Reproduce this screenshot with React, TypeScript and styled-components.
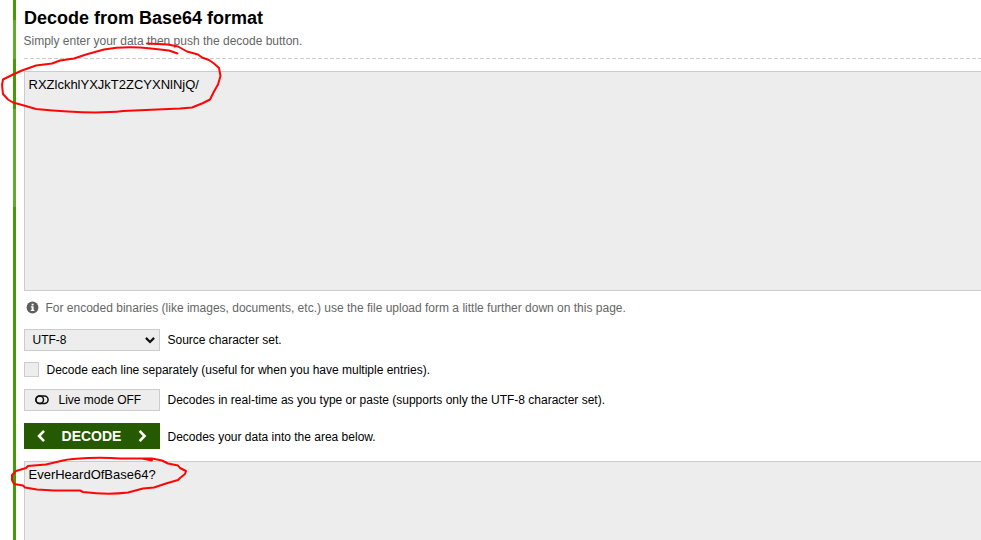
import React from "react";
import styled, { createGlobalStyle } from "styled-components";

const GlobalStyle = createGlobalStyle`
  * { box-sizing: border-box; }
  body {
    margin: 0;
    background: #fff;
    color: #000;
    font: 12px/16px "Liberation Sans", Arial, sans-serif;
    overflow: hidden;
  }
`;

const Page = styled.div`
  position: relative;
  display: flex;
  width: 981px;
  height: 540px;
  padding-left: 13px;
  overflow: hidden;
`;

const Stripe = styled.div`
  flex: 0 0 3px;
  background: linear-gradient(
    #439c03 20px,
    #5fad2b 20px 59px,
    #439c03 59px 109px,
    #5fad2b 109px 207px,
    #439c03 207px
  );
`;

const Main = styled.main`
  flex: none;
  display: flex;
  flex-direction: column;
  width: 985px;
  margin-left: 8px;
`;

const Header = styled.header`
  height: 59px;
  padding-top: 7px;
  flex: none;
  background: repeating-linear-gradient(90deg, #ccc 0 4px, transparent 4px 6px) 0 100% / 100% 1px no-repeat;
`;

const Title = styled.h1`
  margin: 0;
  font-size: 18px;
  line-height: 22px;
  font-weight: bold;
`;

const Subtitle = styled.p`
  margin: 4px 0 0 -0.5px;
  color: #666;
`;

const TextArea = styled.div<{ $height: number; $top: number }>`
  flex: none;
  height: ${(p) => p.$height}px;
  margin-top: ${(p) => p.$top}px;
  padding: 5px 3.5px;
  border: 1px solid #ccc;
  background: #ededed;
  font-size: 13px;
`;

const Hint = styled.div`
  display: flex;
  align-items: center;
  gap: 6.5px;
  height: 16px;
  margin: 9px 0 13px 2px;
  color: #666;
`;

const Row = styled.div<{ $height: number; $bottom: number }>`
  display: flex;
  flex: none;
  align-items: center;
  gap: 7.5px;
  height: ${(p) => p.$height}px;
  margin-bottom: ${(p) => p.$bottom}px;
`;

const Control = styled.div`
  display: flex;
  align-items: center;
  width: 136px;
  height: 22px;
  border: 1px solid #ccc;
  background: #ededed;
`;

const Select = styled(Control)`
  justify-content: space-between;
  padding: 0 3px 0 7.5px;
`;

const LiveToggle = styled(Control)`
  padding-left: 10px;
  gap: 9.5px;
`;

const Checkbox = styled.div`
  width: 15px;
  height: 15px;
  border: 1px solid #ccc;
  background: #ededed;
`;

const DecodeButton = styled.div`
  display: flex;
  align-items: center;
  justify-content: space-between;
  width: 136px;
  height: 26px;
  padding: 0 13px 0 12px;
  background: #265a00;
  color: #fff;
  font-size: 14px;
  font-weight: bold;
`;

const DecodeNote = styled.span`
  padding-top: 2px;
`;

const Marks = styled.svg`
  position: absolute;
  left: 0;
  top: 0;
  pointer-events: none;
`;

const InfoIcon = () => (
  <svg width="13" height="14" viewBox="0 0 13 14">
    <circle cx="6.5" cy="6.5" r="5.9" fill="#5e5e5e" />
    <path d="M5.6 2.7h2v1.8h-2zM4.9 5.3h2.7v3.5h.8v1.1H4.8V8.8h.9V6.4h-.8z" fill="#fff" />
  </svg>
);

const ToggleIcon = () => (
  <svg width="14" height="10" viewBox="0 0 14 10" fill="none" stroke="#111" strokeWidth="1.5">
    <rect x="0.9" y="1" width="12.2" height="7.6" rx="3.8" />
    <circle cx="4.7" cy="4.8" r="3.8" />
  </svg>
);

const SelectArrow = () => (
  <svg width="12" height="10" viewBox="0 0 12 10" fill="none" stroke="#111" strokeWidth="2.2">
    <path d="M1.9 2.9 6 7l4.1-4.1" />
  </svg>
);

const Chevron = ({ d }: { d: string }) => (
  <svg width="10" height="14" viewBox="0 0 10 14" fill="none" stroke="#fff" strokeWidth="2.6">
    <path d={d} />
  </svg>
);

export default function App() {
  return (
    <>
      <GlobalStyle />
      <Page>
        <Stripe />
        <Main>
          <Header>
            <Title>Decode from Base64 format</Title>
            <Subtitle>Simply enter your data then push the decode button.</Subtitle>
          </Header>
          <TextArea $height={220} $top={12}>RXZlckhlYXJkT2ZCYXNlNjQ/</TextArea>
          <Hint>
            <InfoIcon />
            For encoded binaries (like images, documents, etc.) use the file upload form a little further down on this page.
          </Hint>
          <Row $height={22} $bottom={11}>
            <Select>
              UTF-8
              <SelectArrow />
            </Select>
            Source character set.
          </Row>
          <Row $height={15} $bottom={12}>
            <Checkbox />
            Decode each line separately (useful for when you have multiple entries).
          </Row>
          <Row $height={22} $bottom={12}>
            <LiveToggle>
              <ToggleIcon />
              Live mode OFF
            </LiveToggle>
            Decodes in real-time as you type or paste (supports only the UTF-8 character set).
          </Row>
          <Row $height={26} $bottom={0}>
            <DecodeButton>
              <Chevron d="M8 1.8 3 7l5 5.2" />
              DECODE
              <Chevron d="M2.6 1.8 7.6 7l-5 5.2" />
            </DecodeButton>
            <DecodeNote>Decodes your data into the area below.</DecodeNote>
          </Row>
          <TextArea $height={100} $top={12}>EverHeardOfBase64?</TextArea>
        </Main>
        <Marks width="981" height="540" fill="none" stroke="#ff0606" strokeWidth="2" strokeLinecap="round" strokeLinejoin="round">
          <path d="M177.500 53.500 169 50.500 151 48.500C135 46.500 117 47 104 49.500L86 54.500 74 58.500 60 60.500 52 63.500 36 65.500 22 70.500 13 74.500 3 79.500 2 85 3 94 8 99.500 13 102.500 24 105.500 36 109C66 112 98 114 123 111L180 108.500 192 107.500 202 103.500 210 99.500 214 91.500 218 84.500 220.500 76 219 68 214 63.500 209 60 202 57.500 198 54.500 187 51.500 178 46.500 168 44.500 147 43.500" />
          <path d="M152 460.500 142 458.500 120 458.500C101 457 73 458 63 460.500L46 464.500 28 466 26 468 16 471 12 475 12 480 14 484 23 485.500 25 487.500 37 489.500 54 490.500 80 490.500 83 492C99 494 116 494 128 492.500L143 488.500 154 487.500 166 483.500 178 480 180 478 185 474 186 471 180 468 178 465.500 168 463.500 162 460.500 152 458.500 142 458.500" />
        </Marks>
      </Page>
    </>
  );
}
